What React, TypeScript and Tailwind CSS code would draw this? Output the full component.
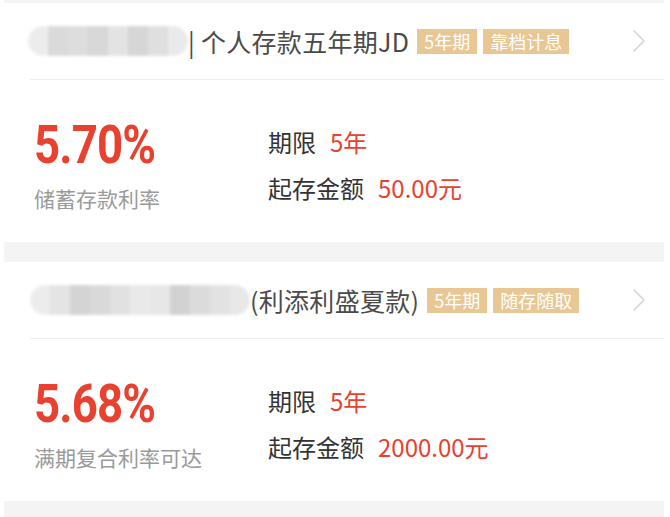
import React from 'react';

type Product = {
  blurCells: string[];
  title: string;
  tags: string[];
  rate: string;
  rateLabel: string;
  term: string;
  minAmount: string;
};

const products: Product[] = [
  {
    blurCells: ['#ececec', '#d9d9d9', '#dcdcdc', '#d6d6d6', '#e2e2e2', '#d4d4d4', '#dedede', '#e9e9e9'],
    title: '| 个人存款五年期JD',
    tags: ['5年期', '靠档计息'],
    rate: '5.70%',
    rateLabel: '储蓄存款利率',
    term: '5年',
    minAmount: '50.00元'
  },
  {
    blurCells: ['#ececec', '#e3e3e3', '#d2d2d2', '#d8d8d8', '#e0e0e0', '#e8e8e8', '#e6e6e6', '#d0d0d0', '#dadada', '#e1e1e1', '#e7e7e7'],
    title: '(利添利盛夏款)',
    tags: ['5年期', '随存随取'],
    rate: '5.68%',
    rateLabel: '满期复合利率可达',
    term: '5年',
    minAmount: '2000.00元'
  }
];

const cjk = { fontFamily: '"Noto Sans CJK SC", "Noto Sans", sans-serif' };

function Chevron() {
  return (
    <svg width="14" height="24" viewBox="0 0 14 24" fill="none">
      <path d="M2 2 L12 12 L2 22" stroke="#d4d4d4" strokeWidth="1.6" strokeLinecap="round" strokeLinejoin="round" />
    </svg>);
}

function ProductCard({ p, index }: {p: Product;index: number;}) {
  return (
    <div className="bg-white">
      {/* title row */}
      <div className={`h-[76px] flex items-center pr-[18px] ${index === 0 ? 'pl-[24px]' : 'pl-[26px]'}`}>
        <div className="flex h-[30px] rounded-full overflow-hidden blur-[1.5px] opacity-95">
          {p.blurCells.map((c, i) =>
          <div key={i} className="w-[20px] h-full" style={{ background: c }}></div>
          )}
        </div>
        <span className="text-[25px] leading-none text-[#4a4a4a] whitespace-nowrap tracking-[0.3px]" style={cjk}>
          {p.title}
        </span>
        <div className="flex gap-[6px] ml-[8px]">
          {p.tags.map((t) =>
          <span
            key={t}
            className="bg-[#e8c794] text-white text-[18px] leading-[25px] px-[7px] whitespace-nowrap"
            style={cjk}>
              {t}
            </span>
          )}
        </div>
        <div className="ml-auto">
          <Chevron />
        </div>
      </div>
      <div className="ml-[26px] border-t border-[#eeeeee]"></div>

      {/* body */}
      <div className="h-[162px] flex pl-[30px]">
        <div className="w-[234px] pt-[37px]">
          <div
            className="text-[53px] leading-[56px] font-bold text-[#e8412f] tracking-[-1px] origin-left scale-x-[0.86]"
            style={{ fontFamily: 'Roboto, "Liberation Sans", sans-serif' }}>
            {p.rate}
          </div>
          <div className="text-[21px] leading-[24px] text-[#9a9a9a] mt-[13px]" style={cjk}>
            {p.rateLabel}
          </div>
        </div>
        <div className="pt-[47px] flex flex-col gap-[16px]" style={cjk}>
          <div className="text-[24px] leading-[30px] text-[#333] flex gap-[14px]">
            <span>期限</span>
            <span className="text-[#e8412f]">{p.term}</span>
          </div>
          <div className="text-[24px] leading-[30px] text-[#333] flex gap-[14px]">
            <span>起存金额</span>
            <span className="text-[#e8412f]">{p.minAmount}</span>
          </div>
        </div>
      </div>
    </div>);
}

export default function App() {
  return (
    <div className="w-[670px] h-[517px] bg-white overflow-hidden">
      <div className="ml-[4px] w-[660px]">
        <div className="h-[3px] bg-[#f4f4f4]"></div>
        {products.map((p, i) =>
        <React.Fragment key={i}>
            <ProductCard p={p} index={i} />
            <div className="h-[20px] bg-[#f4f4f4]"></div>
          </React.Fragment>
        )}
      </div>
    </div>);
}
